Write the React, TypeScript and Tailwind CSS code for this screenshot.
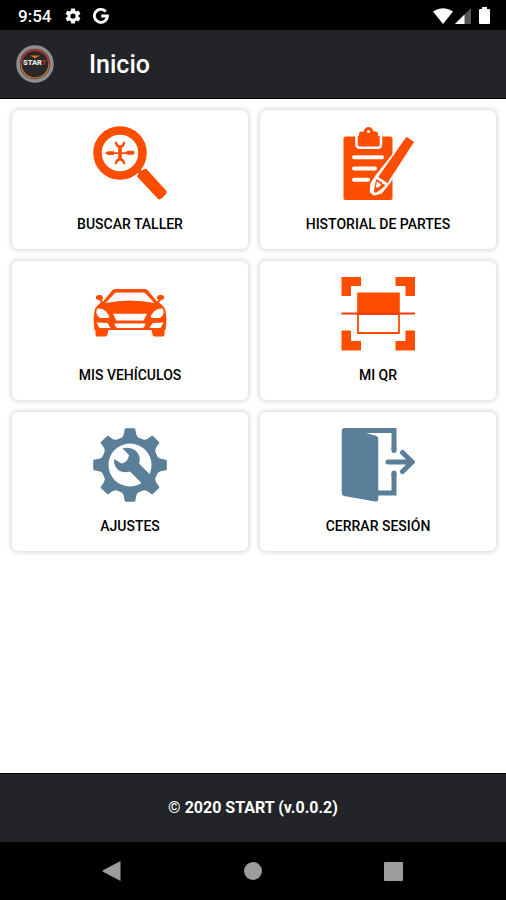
import type { ReactNode } from "react";

function SearchWorkshopIcon() {
  return (
    <svg viewBox="0 0 74 74" className="size-[74px] text-[#ff4d00]" fill="currentColor" aria-hidden="true">
      <circle cx="27" cy="27" r="22.5" fill="none" stroke="currentColor" strokeWidth="8.5" />
      <path d="M44 50.500 45.500 47 43 43.500 45.500 41.500 48.500 44.500 53 42.500 73 64.500Q74.500 66.500 72.800 68.300L68.500 72.600Q66.500 74.300 64.600 72.500Z" />
      <path d="M22 15c1 1 2.500 1.400 2.700 2.700.3 1 1.500 1.500 2.300 1.500s2-.5 2.300-1.500c.2-1.300 1.700-1.700 2.700-2.700.5 3.500-.8 5.500-3.200 6.700v10.600c2.400 1.200 3.700 3.200 3.200 6.700-1-1-2.500-1.400-2.700-2.700-.3-1-1.500-1.500-2.300-1.500s-2 .5-2.300 1.500c-.2 1.300-1.700 1.700-2.700 2.700-.5-3.500.8-5.500 3.200-6.700V21.700c-2.400-1.200-3.700-3.200-3.200-6.700Z" />
      <path d="M12.500 26.500 15 25.300h6v1h12v-.6l2-1h5l1.500 1v2l-1.500 1h-5l-2-.8H21v1h-6l-2.500-1.200Z" />
    </svg>
  );
}

function ClipboardIcon() {
  return (
    <svg viewBox="0 0 74 74" className="size-[74px] text-[#ff4d00]" aria-hidden="true">
      <rect x="2.500" y="10.500" width="49" height="63.500" rx="2" fill="currentColor" />
      <path d="M15.500 10v8.500q0 3.200 3.500 3.200h17.500q3.500 0 3.500-3.200V10" fill="currentColor" stroke="#fff" strokeWidth="2.500" />
      <path d="M18 8q0-2.500 2.500-2.500h2.300C23 2.500 25 1 27.500 1s4.500 1.500 4.700 4.500h2.300Q37 5.500 37 8v10.500H18Z" fill="currentColor" />
      <circle cx="27.500" cy="5.500" r="1.600" fill="#fff" />
      <path d="M13 31.200h28M13 42.500h21M13 53.700h14" stroke="#fff" strokeWidth="4" strokeLinecap="round" />
      <path d="m66 10.700 7 5.200-24.500 41-8 10-7.500 2-3.500-3 .5-8 5-8Z" fill="#fff" stroke="#fff" strokeWidth="1.500" strokeLinejoin="round" />
      <path d="m65.500 10.700 7.500 5.200-26.500 41-9.300-5.900Z" fill="currentColor" />
      <path d="m35 53.500 2.500.3.800 2 2.200-.3.800 2.500 2.200.2.500 1.800-8.500 6.500q-2.500.8-2.500-2Z" fill="currentColor" />
      <path d="m35.700 55.500 4.800 3.200-4 3.300-1.500-1Z" fill="#fff" />
    </svg>
  );
}

function CarIcon() {
  return (
    <svg viewBox="0 0 74 74" className="size-[74px] text-[#ff4d00]" aria-hidden="true">
      <path
        fill="currentColor"
        d="M21.500 12h31l2 1L64 24.500l1.500-1.500-1.500-1.500q-.5-2.500 2.500-3.500h2.500q3 1 2 4l-3.500 1.500-1.500 2 3 2.500q3 2.500 3.500 6l1 8-.8 10.500-1.200 1V58q-.5 1.500-2 1.500h-8q-1.500 0-1.800-1.500l-1.200-5h-43l-1.200 5q-.3 1.500-1.800 1.500h-8Q3 59.500 2.500 58v-4.500l-1.200-1L.5 42l1-8q.5-3.500 3.500-6l3-2.500-1.500-2L3 22q-1-3 2-4h2.500q3 1 2.500 3.500L8.500 23l1.500 1.500L19.500 13Z"
      />
      <g fill="#fff">
        <path d="M22.500 15.500 12.500 26q12-2.500 24.500-2.500T61.500 26l-10-10.500Z" />
        <path d="M20 36.800h34l-3.300 6.700H23.300Z" />
        <path d="M4 31.500q5.500-.5 9 3 3 3.500 3.500 5.500l-1.500 1H7q-5-3-3-9.500ZM70 31.500q-5.500-.5-9 3-3 3.500-3.500 5.500l1.500 1h8q5-3 3-9.500Z" />
        <path d="M21.500 46.500h31q-1 4.500-3.500 4.500H25q-2.500 0-3.500-4.500Z" />
        <path d="m3.500 45.500 11 .5 3 5H6.500ZM70.500 45.500l-11 .5-3 5h11Z" />
      </g>
    </svg>
  );
}

function ScanIcon() {
  return (
    <svg viewBox="0 0 74 74" className="size-[74px] text-[#ff4d00]" fill="currentColor" aria-hidden="true">
      <path d="M.5 0H20v9H10v10H.5ZM54.500 0H74v19h-9.500V9h-10ZM.5 53.500H10v10.500h10v9.500H.5ZM64.500 53.500H74v20H54.500V64h10Z" />
      <path d="M17 37h41v19H17Z" fill="#fff" stroke="currentColor" strokeWidth="1.800" />
      <path d="M16.200 15.500h42.600V37H16.200Z" />
      <path d="M.5 36.500H74" stroke="#ee3b10" strokeWidth="1.800" />
    </svg>
  );
}

const toothAngles = [0, 45, 90, 135, 180, 225, 270, 315];

function SettingsIcon() {
  return (
    <svg viewBox="0 0 74 74" className="size-[74px] text-[#5b7f99]" fill="currentColor" aria-hidden="true">
      <circle cx="37" cy="37" r="28.500" />
      {toothAngles.map((angle) => (
        <path
          key={angle}
          transform={`rotate(${angle} 37 37)`}
          d="M26 11q4.500-1.500 5-6l.7-4Q32 .2 33 .2h8q1 0 1.300.8l.7 4q.5 4.500 5 6L37 20Z"
        />
      ))}
      <circle cx="37" cy="37" r="21.500" fill="#fff" />
      <path d="M29.500 20.500c7.500-2.500 15.500 1.500 17 8.500.5 2.500.2 4.500-.5 6.500l15 15-8.500 8.500-15.500-15.500c-8 2.500-15-1.500-16-10l.3-2.500 7.200 4.500q6.500-1 7.500-8.500Z" />
    </svg>
  );
}

function ExitIcon() {
  return (
    <svg viewBox="0 0 74 74" className="size-[74px] text-[#5b7f99]" aria-hidden="true">
      <path d="M4 2.500h49V22M53 45v20H34" fill="none" stroke="currentColor" strokeWidth="5" />
      <path d="M53 20v2.500M53 45v2" stroke="currentColor" strokeWidth="5" strokeLinecap="round" />
      <path d="M3 0h22v5l10 2.700q2.300.8 2.300 3V71q0 3-3 2.500L3 68q-2.300-.5-2.300-3V2.500Q.7 0 3 0Z" fill="currentColor" />
      <path d="M47 34h23M61.500 24.500 71.200 34l-9.700 9.500" fill="none" stroke="currentColor" strokeWidth="5" strokeLinecap="round" />
    </svg>
  );
}

function StartLogo() {
  return (
    <svg viewBox="0 0 38 38" className="size-[38px]" role="img" aria-label="START">
      <circle cx="19" cy="19" r="17" fill="#292827" stroke="#8e8e90" strokeWidth="3.500" />
      <path d="M5 19a14 14 0 0 1 28 0" fill="none" stroke="#a83a38" strokeWidth="2" />
      <path d="M5 19a14 14 0 0 0 28 0" fill="none" stroke="#b5713c" strokeWidth="1.500" />
      <path d="M14 10.500h10l-5 3Z" fill="#d96f20" />
      <text x="7" y="19.500" fontFamily="Roboto, sans-serif" fontSize="7.500" fontWeight="900" fill="#e8e8e8">
        STAR<tspan fill="#b52f2a">T</tspan>
      </text>
    </svg>
  );
}

function StatusBar() {
  return (
    <div className="flex h-[30px] items-center justify-between bg-black pt-px pr-4 pl-[18px] text-white">
      <div className="flex items-center gap-3">
        <span className="text-[17px] leading-5 font-medium">9:54</span>
        <svg viewBox="0 0 24 24" className="ml-px size-[18px]" fill="currentColor" aria-hidden="true">
          <path d="M19.400 13a7.500 7.500 0 0 0 0-2l2.200-1.700a.5.5 0 0 0 .1-.6l-2-3.500a.5.5 0 0 0-.6-.2l-2.500 1a7.300 7.300 0 0 0-1.700-1l-.4-2.600A.5.500 0 0 0 14 2h-4a.5.500 0 0 0-.5.400L9.100 5a7.700 7.700 0 0 0-1.700 1l-2.500-1a.5.500 0 0 0-.6.200l-2 3.500a.5.500 0 0 0 .1.600L4.600 11a7.900 7.900 0 0 0 0 2l-2.200 1.700a.5.500 0 0 0-.1.600l2 3.500c.1.200.4.300.6.200l2.500-1a7.300 7.300 0 0 0 1.700 1l.4 2.600c0 .2.200.4.500.4h4c.2 0 .5-.2.500-.4l.4-2.600a7.700 7.700 0 0 0 1.700-1l2.500 1c.2.100.5 0 .6-.2l2-3.500a.5.500 0 0 0-.1-.6ZM12 15.500a3.500 3.500 0 1 1 0-7 3.500 3.500 0 0 1 0 7Z" />
        </svg>
        <svg viewBox="0 0 16 16" className="-ml-px size-4" fill="none" stroke="currentColor" strokeWidth="2.800" aria-hidden="true">
          <path d="M12.800 3.600A6.500 6.500 0 1 0 14.400 8H8.200" />
        </svg>
      </div>
      <div className="flex items-center">
        <svg viewBox="0 0 20 16" className="h-4 w-5" fill="currentColor" aria-hidden="true">
          <path d="M0 3.500Q10-3 20 3.500L10 16Z" />
        </svg>
        <svg viewBox="0 0 16 16" className="ml-[2px] size-4" aria-hidden="true">
          <path d="M16 0v16H0Z" fill="#555" />
          <path d="M9.500 6.500V16H0Z" fill="#fff" />
        </svg>
        <svg viewBox="0 0 11 17" className="ml-2 h-[17px] w-[11px]" fill="currentColor" aria-hidden="true">
          <path d="M3 0h5v2h2q1 0 1 1v13q0 1-1 1H1q-1 0-1-1V3q0-1 1-1h2Z" />
        </svg>
      </div>
    </div>
  );
}

function MenuCard({ label, icon }: { label: string; icon: ReactNode }) {
  return (
    <button
      type="button"
      className="flex flex-col items-center gap-[14px] rounded-md bg-white pt-4 pb-[15px] text-sm font-medium text-black uppercase shadow-[0_0_5px_1px_rgba(0,0,0,0.17)]"
    >
      {icon}
      <span>{label}</span>
    </button>
  );
}

export default function App() {
  return (
    <div className="flex min-h-screen flex-col bg-white font-[Roboto,sans-serif]">
      <StatusBar />
      <header className="flex h-[69px] items-center gap-[35px] border-b border-black bg-[#222428] px-4 text-white">
        <StartLogo />
        <h1 className="pt-px text-[25px] leading-8 font-medium">Inicio</h1>
      </header>
      <main className="grow pt-[11px] pr-[10px] pl-3">
        <div className="grid grid-cols-2 gap-3">
          <MenuCard label="Buscar taller" icon={<SearchWorkshopIcon />} />
          <MenuCard label="Historial de partes" icon={<ClipboardIcon />} />
          <MenuCard label="Mis vehículos" icon={<CarIcon />} />
          <MenuCard label="Mi QR" icon={<ScanIcon />} />
          <MenuCard label="Ajustes" icon={<SettingsIcon />} />
          <MenuCard label="Cerrar sesión" icon={<ExitIcon />} />
        </div>
      </main>
      <footer className="flex h-[69px] items-center justify-center border-t border-black bg-[#222428] text-base font-bold text-white">
        © 2020 START (v.0.0.2)
      </footer>
      <nav className="grid h-[58px] grid-cols-3 items-center justify-items-center bg-black px-[42px] text-[#9c9c9c]">
        <button type="button" aria-label="Atrás">
          <svg viewBox="0 0 20 20" className="size-5" fill="currentColor" aria-hidden="true">
            <path d="M18.500 0v20L.5 10.500v-1Z" />
          </svg>
        </button>
        <button type="button" aria-label="Pantalla de inicio" className="size-[18px] rounded-full bg-current" />
        <button type="button" aria-label="Recientes" className="size-[19px] rounded-[1px] bg-current" />
      </nav>
    </div>
  );
}
